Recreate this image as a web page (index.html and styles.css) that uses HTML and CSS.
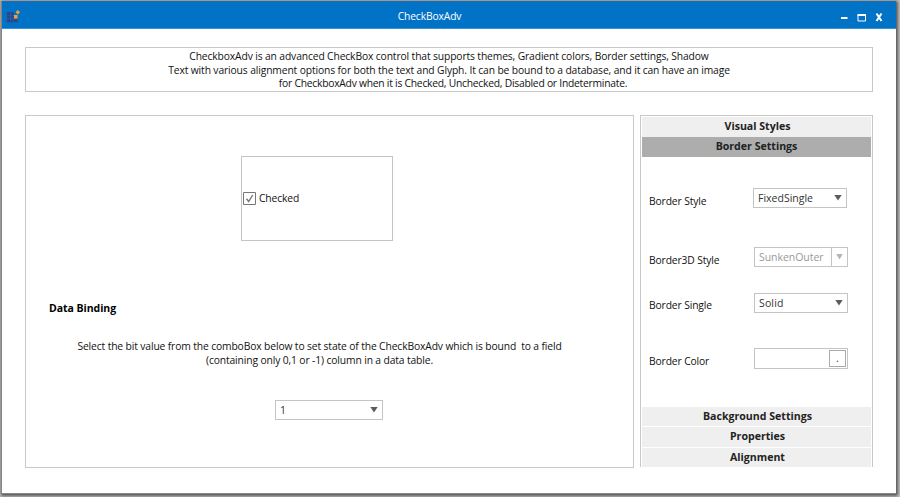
FILE: index.html
```html
<!DOCTYPE html>
<html lang="en">
<head>
<meta charset="utf-8">
<title>CheckBoxAdv</title>
<link rel="stylesheet" href="styles.css">
</head>
<body>
<div class="window">
  <header class="titlebar">
    <svg class="logo" width="14" height="14" viewBox="0 0 14 14">
      <path fill="#39407f" d="M0 2h3v3H0zM3.600 2h3v3h-3zM0 5.600h3v3H0zM3.600 5.600h3v3h-3zM0 9.200h3v3H0zM3.600 9.200h3v3h-3zM7.200 9.200h3.500v3H7.200z"/>
      <path fill="#f7a02d" d="M10.600 0l2.400 2-2 2.400-2.400-2zM7 5h3.500v3.500H7z"/>
    </svg>
    <h1 class="title">CheckBoxAdv</h1>
    <svg class="controls" width="44" height="12" viewBox="0 0 44 12">
      <path d="M1 7h6.500" stroke="#fff" stroke-width="2"/>
      <path d="M18 4h7.500v6H18z" fill="none" stroke="#fff" stroke-width="1"/>
      <path d="M17.500 4h8.500" stroke="#fff" stroke-width="2"/>
      <path d="M36.500 2.500l5 7.500M41.500 2.500l-5 7.500" stroke="#fff" stroke-width="2"/>
    </svg>
  </header>
  <main class="content">
    <section class="intro">
      <p>CheckboxAdv is an advanced CheckBox control that supports themes, Gradient colors, Border settings, Shadow</p>
      <p>Text with various alignment options for both the text and Glyph. It can be bound to a database, and it can have an image</p>
      <p class="last">for CheckboxAdv when it is Checked, Unchecked, Disabled or Indeterminate.</p>
    </section>
    <div class="columns">
      <section class="demo">
        <div class="sample">
          <svg class="check" width="13" height="13" viewBox="0 0 13 13">
            <path d="M.5.5h12v12H.5z" fill="#fff" stroke="#777"/>
            <path d="M3.500 6.800l2.200 2.700 4-6.500" fill="none" stroke="#777" stroke-width="1.400"/>
          </svg>
          <span class="caption">Checked</span>
        </div>
        <h2 class="heading">Data Binding</h2>
        <div class="hint">
          <p>Select the bit value from the comboBox below to set state of the CheckBoxAdv which is bound &nbsp;to a field</p>
          <p>(containing only 0,1 or -1) column in a data table.</p>
        </div>
        <div class="combo bit"><span>1</span><i class="arrow"></i></div>
      </section>
      <aside class="settings">
        <div class="group">Visual Styles</div>
        <div class="group active">Border Settings</div>
        <div class="fields">
          <div class="row style"><label>Border Style</label><div class="combo"><span>FixedSingle</span><i class="arrow"></i></div></div>
          <div class="row style3d"><label>Border3D Style</label><div class="combo disabled"><span>SunkenOuter</span><b class="drop"><i class="arrow"></i></b></div></div>
          <div class="row single"><label>Border Single</label><div class="combo"><span class="solid">Solid</span><i class="arrow"></i></div></div>
          <div class="row color"><label>Border Color</label><div class="combo picker"><span></span><b class="more">.</b></div></div>
        </div>
        <div class="group">Background Settings</div>
        <div class="group">Properties</div>
        <div class="group">Alignment</div>
      </aside>
    </div>
  </main>
</div>
</body>
</html>
```
FILE: styles.css
```css
* { box-sizing: border-box; }
body {
  margin: 0;
  height: 497px;
  padding: 1px 4px 3px 1px;
  overflow: hidden;
  background: #c4c4c4;
  font: 10.3px/14px "Open Sans", sans-serif;
  letter-spacing: -0.126px;
  color: #111;
}
h1, h2, p { margin: 0; font-size: inherit; font-weight: inherit; }
.window {
  height: 493px;
  background: #fff;
  border: 1px solid #858585;
  border-top-color: #1b6fb0;
  border-right: 0;
  box-shadow: 1px 1px 3px 1px #555;
}
.titlebar {
  display: flex;
  align-items: center;
  height: 27px;
  padding: 0 12px 0 5px;
  background: #0173c7;
  border-bottom: 1px solid #3b92d4;
  color: #fff;
}
.logo { margin-top: 3px; }
.title { flex: 1; text-align: center; margin-top: 1px; padding-right: 2px; }
.controls { margin-top: 4px; }
.content { padding: 18px 23px 0; }
.intro {
  width: 848px;
  height: 45px;
  padding-top: 1px;
  border: 1px solid #c8c8c8;
  text-align: center;
}
.intro p { height: 14px; white-space: nowrap; }
.intro .last { letter-spacing: -0.24px; margin-top: -1px; padding-left: 8px; }
.columns { display: flex; gap: 6px; margin-top: 23px; }
.demo { width: 609px; height: 353px; border: 1px solid #c8c8c8; }
.sample {
  display: flex;
  align-items: center;
  gap: 3px;
  width: 152px;
  height: 85px;
  margin: 40px 0 0 215px;
  padding-left: 1px;
  border: 1px solid #c4c4c4;
}
.check { margin-bottom: 1px; }
.caption { padding-bottom: 2px; }
.heading {
  margin: 60px 0 0 23px;
  font-weight: 700;
  font-size: 10.5px;
  letter-spacing: -0.04px;
  color: #000;
}
.hint { margin-top: 24px; padding-right: 20px; text-align: center; white-space: nowrap; }
.combo {
  display: flex;
  align-items: center;
  justify-content: space-between;
  width: 94px;
  height: 20px;
  padding: 0 4px;
  border: 1px solid #c4c4c4;
  color: #333;
  font-size: 10.5px;
  letter-spacing: 0;
}
.bit { width: 108px; margin: 33px 0 0 249px; }
.arrow {
  width: 8px;
  height: 6px;
  margin-bottom: 1px;
  background: #5c5c5c;
  clip-path: polygon(0 0, 100% 0, 50% 100%);
}
.settings {
  display: flex;
  flex-direction: column;
  gap: 1px;
  width: 233px;
  height: 352px;
  padding: 1px 1px 0;
  border: 1px solid #c8c8c8;
  border-bottom: 0;
}
.group {
  height: 19.500px;
  background: #efefef;
  text-align: center;
  font-weight: 700;
  font-size: 10.6px;
  line-height: 19px;
  letter-spacing: 0;
  padding-left: 2px;
  color: #222;
}
.active { height: 20.500px; margin-top: -1px; background: #adadad; padding-left: 0; }
.fields { flex: 1; padding: 30px 23px 0 7px; }
.row { display: flex; justify-content: space-between; }
.row label { padding-top: 6px; }
.style .combo { margin-right: 1px; }
.style3d { margin-top: 39px; }
.single { margin-top: 26px; }
.row.single label { padding-top: 5px; }
.color { margin-top: 35px; }
.disabled { color: #999; padding-right: 0; letter-spacing: -0.05px; }
.solid { letter-spacing: 0.15px; }
.drop {
  display: flex;
  align-items: center;
  justify-content: center;
  width: 16px;
  height: 18px;
  border-left: 1px solid #c4c4c4;
}
.disabled .arrow { width: 7px; background: #b5b5b5; }
.picker { height: 21px; padding-right: 1px; }
.more {
  width: 17px;
  height: 17px;
  border: 1px solid #aaa;
  text-align: center;
  font-weight: 400;
  line-height: 14px;
}
```
